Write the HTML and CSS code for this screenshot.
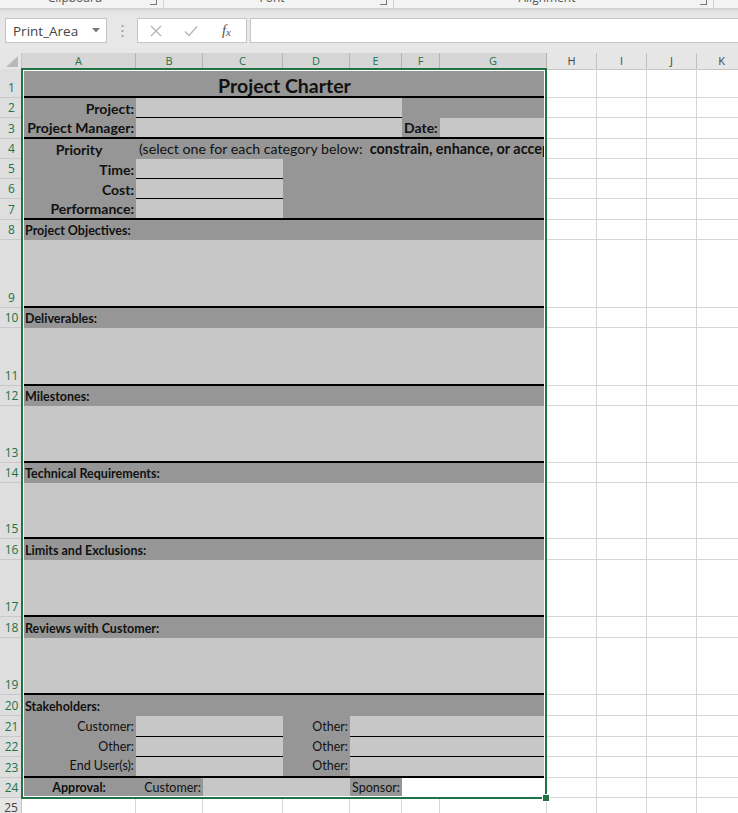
FILE: index.html
```html
<!DOCTYPE html>
<html>
<head>
<meta charset="utf-8">
<title>Project Charter</title>
<link rel="stylesheet" href="styles.css">
</head>
<body>
<div class="app">
  <div class="ribbon">
    <div class="grp g1"><span class="glabel">Clipboard</span><span class="launch"></span></div>
    <div class="grp g2"><span class="glabel">Font</span><span class="launch"></span></div>
    <div class="grp g3"><span class="glabel">Alignment</span><span class="launch"></span></div>
  </div>
  <div class="fbar">
    <div class="namebox">
      <span class="nbtext">Print_Area</span>
      <svg class="nbarrow" width="8" height="5" viewBox="0 0 8 5"><path d="M0 0 L8 0 L4 4.5 Z" fill="#7a7a7a"/></svg>
    </div>
    <div class="grip">
      <svg width="3" height="12" viewBox="0 0 3 12"><rect x="0.5" y="0" width="2" height="2" fill="#a6a6a6"/><rect x="0.5" y="5" width="2" height="2" fill="#a6a6a6"/><rect x="0.5" y="10" width="2" height="2" fill="#a6a6a6"/></svg>
    </div>
    <div class="fbtns">
      <svg class="ficon" width="12" height="12" viewBox="0 0 12 12"><path d="M1 1 L11 11 M11 1 L1 11" stroke="#b4b4b4" stroke-width="1.3" fill="none"/></svg>
      <svg class="ficon" width="14" height="12" viewBox="0 0 14 12"><path d="M1 6.5 L5 10.5 L13 1.5" stroke="#b4b4b4" stroke-width="1.4" fill="none"/></svg>
      <span class="fx">f<span class="fxx">x</span></span>
    </div>
    <div class="finput"></div>
  </div>

  <div class="sheet">
    <div class="colheads">
      <div class="corner"><svg width="12" height="11" viewBox="0 0 12 11"><path d="M12 0 L12 11 L0 11 Z" fill="#b9b9b9"/></svg></div>
      <div class="ch sel">A</div>
      <div class="ch sel">B</div>
      <div class="ch sel">C</div>
      <div class="ch sel">D</div>
      <div class="ch sel">E</div>
      <div class="ch sel">F</div>
      <div class="ch sel">G</div>
      <div class="ch">H</div>
      <div class="ch">I</div>
      <div class="ch">J</div>
      <div class="ch">K</div>
    </div>

    <div class="row h29">
      <div class="rh">1</div>
      <div class="pa thick">
        <div class="c d s7 title">Project Charter</div>
      </div>
      <div class="ext"></div>
    </div>

    <div class="row h20">
      <div class="rh">2</div>
      <div class="pa">
        <div class="c d lab">Project:</div>
        <div class="c l s4 ub"></div>
        <div class="c d s2"></div>
      </div>
      <div class="ext"></div>
    </div>

    <div class="row h21">
      <div class="rh">3</div>
      <div class="pa thick">
        <div class="c d lab">Project Manager:</div>
        <div class="c l s4"></div>
        <div class="c d lab left">Date:</div>
        <div class="c l"></div>
      </div>
      <div class="ext"></div>
    </div>

    <div class="row h20">
      <div class="rh">4</div>
      <div class="pa">
        <div class="c d lab center">Priority</div>
        <div class="c d s6 note">(select one for each category below:  <b>constrain, enhance, or accept)</b></div>
      </div>
      <div class="ext"></div>
    </div>

    <div class="row h20">
      <div class="rh">5</div>
      <div class="pa">
        <div class="c d lab">Time:</div>
        <div class="c l s2 ub"></div>
        <div class="c d s4"></div>
      </div>
      <div class="ext"></div>
    </div>

    <div class="row h20">
      <div class="rh">6</div>
      <div class="pa">
        <div class="c d lab">Cost:</div>
        <div class="c l s2 ub"></div>
        <div class="c d s4"></div>
      </div>
      <div class="ext"></div>
    </div>

    <div class="row h21">
      <div class="rh">7</div>
      <div class="pa thick">
        <div class="c d lab">Performance:</div>
        <div class="c l s2"></div>
        <div class="c d s4"></div>
      </div>
      <div class="ext"></div>
    </div>

    <div class="row h20">
      <div class="rh">8</div>
      <div class="pa"><div class="c d s7 sec">Project Objectives:</div></div>
      <div class="ext"></div>
    </div>
    <div class="row h68">
      <div class="rh">9</div>
      <div class="pa thick"><div class="c l s7"></div></div>
      <div class="ext"></div>
    </div>

    <div class="row h20">
      <div class="rh">10</div>
      <div class="pa"><div class="c d s7 sec">Deliverables:</div></div>
      <div class="ext"></div>
    </div>
    <div class="row h58">
      <div class="rh">11</div>
      <div class="pa thick"><div class="c l s7"></div></div>
      <div class="ext"></div>
    </div>

    <div class="row h20">
      <div class="rh">12</div>
      <div class="pa"><div class="c d s7 sec">Milestones:</div></div>
      <div class="ext"></div>
    </div>
    <div class="row h57">
      <div class="rh">13</div>
      <div class="pa thick"><div class="c l s7"></div></div>
      <div class="ext"></div>
    </div>

    <div class="row h20">
      <div class="rh">14</div>
      <div class="pa"><div class="c d s7 sec">Technical Requirements:</div></div>
      <div class="ext"></div>
    </div>
    <div class="row h56">
      <div class="rh">15</div>
      <div class="pa thick"><div class="c l s7"></div></div>
      <div class="ext"></div>
    </div>

    <div class="row h21">
      <div class="rh">16</div>
      <div class="pa"><div class="c d s7 sec">Limits and Exclusions:</div></div>
      <div class="ext"></div>
    </div>
    <div class="row h57">
      <div class="rh">17</div>
      <div class="pa thick"><div class="c l s7"></div></div>
      <div class="ext"></div>
    </div>

    <div class="row h21">
      <div class="rh">18</div>
      <div class="pa"><div class="c d s7 sec">Reviews with Customer:</div></div>
      <div class="ext"></div>
    </div>
    <div class="row h57">
      <div class="rh">19</div>
      <div class="pa thick"><div class="c l s7"></div></div>
      <div class="ext"></div>
    </div>

    <div class="row h21">
      <div class="rh">20</div>
      <div class="pa"><div class="c d s7 sec">Stakeholders:</div></div>
      <div class="ext"></div>
    </div>

    <div class="row h21">
      <div class="rh">21</div>
      <div class="pa">
        <div class="c d lab sm">Customer:</div>
        <div class="c l s2 ub"></div>
        <div class="c d lab sm">Other:</div>
        <div class="c l s3 ub"></div>
      </div>
      <div class="ext"></div>
    </div>

    <div class="row h20">
      <div class="rh">22</div>
      <div class="pa">
        <div class="c d lab sm">Other:</div>
        <div class="c l s2 ub"></div>
        <div class="c d lab sm">Other:</div>
        <div class="c l s3 ub"></div>
      </div>
      <div class="ext"></div>
    </div>

    <div class="row h21">
      <div class="rh">23</div>
      <div class="pa thick">
        <div class="c d lab sm">End User(s):</div>
        <div class="c l s2"></div>
        <div class="c d lab sm">Other:</div>
        <div class="c l s3"></div>
      </div>
      <div class="ext"></div>
    </div>

    <div class="row h20">
      <div class="rh">24</div>
      <div class="pa">
        <div class="c d lab sm bold center">Approval:</div>
        <div class="c d lab sm">Customer:</div>
        <div class="c l s2"></div>
        <div class="c d lab sm">Sponsor:</div>
        <div class="c w s2"></div>
      </div>
      <div class="ext"></div>
    </div>

    <div class="row h20">
      <div class="rh plain">25</div>
      <div class="pa">
        <div class="c e"></div><div class="c e"></div><div class="c e"></div><div class="c e"></div><div class="c e"></div><div class="c e"></div><div class="c e"></div>
      </div>
      <div class="ext"></div>
    </div>

    <div class="selection"></div>
  </div>
</div>
</body>
</html>
```

FILE: styles.css
```css
html, body {
  margin: 0;
  padding: 0;
}
body {
  background: #e7e7e7;
  font-family: "Lato", "Liberation Sans", sans-serif;
  overflow: hidden;
}
.app {
  width: 738px;
  height: 813px;
  overflow: hidden;
}

/* ribbon bottom strip */
.ribbon {
  height: 8px;
  background: #f3f3f3;
  display: flex;
  overflow: hidden;
}
.grp {
  display: flex;
  align-items: flex-start;
  border-right: 1px solid #d2d2d2;
  box-sizing: border-box;
}
.g1 { width: 164px; }
.g2 { width: 230px; }
.g3 { width: 320px; }
.glabel {
  flex: 1;
  text-align: center;
  font-family: "Open Sans", "Liberation Sans", sans-serif;
  font-size: 12px;
  line-height: 14px;
  margin-top: -9px;
  color: #555;
}
.launch {
  width: 6px;
  height: 6px;
  margin: -2px 6px 0 0;
  border-right: 1px solid #777;
  border-bottom: 1px solid #777;
}

/* formula bar */
.fbar {
  height: 45px;
  box-sizing: border-box;
  padding-top: 10px;
  display: flex;
  align-items: flex-start;
  background: linear-gradient(#cfcfcf, #e2e2e2 3px, #e7e7e7 6px);
}
.namebox {
  margin-left: 5px;
  width: 102px;
  height: 25px;
  box-sizing: border-box;
  background: #fff;
  border: 1px solid #c6c6c6;
  display: flex;
  align-items: center;
  padding: 0 6px 0 7px;
}
.nbtext {
  flex: 1;
  font-family: "Open Sans", "Liberation Sans", sans-serif;
  font-size: 13.5px;
  color: #444;
}
.grip {
  width: 30px;
  height: 25px;
  display: flex;
  align-items: center;
  justify-content: center;
}
.fbtns {
  width: 110px;
  height: 25px;
  box-sizing: border-box;
  background: #fff;
  border: 1px solid #c6c6c6;
  display: flex;
  align-items: center;
  padding-left: 12px;
  gap: 22px;
}
.fx {
  font-family: "Liberation Serif", serif;
  font-style: italic;
  font-size: 14.5px;
  color: #555;
  margin-left: 2px;
}
.fxx {
  font-size: 11px;
  position: relative;
  top: 1px;
}
.finput {
  margin-left: 3px;
  flex: 1;
  height: 25px;
  box-sizing: border-box;
  background: #fff;
  border: 1px solid #c6c6c6;
  border-right: none;
}

/* sheet */
.sheet {
  position: relative;
  background: #fff;
}
.colheads {
  display: grid;
  grid-template-columns: 22px 114px 67px 80px 67px 52px 38px 107px 50px 50px 50px 50px;
  height: 16px;
  background: #e6e6e6;
}
.corner {
  display: flex;
  align-items: flex-end;
  justify-content: flex-end;
  padding: 0 3px 2px 0;
  border-right: 1px solid #c4c4c4;
  border-bottom: 1px solid #c4c4c4;
}
.ch {
  box-sizing: border-box;
  border-right: 1px solid #c0c0c0;
  border-bottom: 1px solid #c4c4c4;
  font-family: "Open Sans", "Liberation Sans", sans-serif;
  font-size: 11px;
  line-height: 16px;
  text-align: center;
  color: #444;
}
.ch.sel {
  background: #d6d6d6;
  color: #217346;
  border-right-color: #b4b4b4;
}

.row {
  display: grid;
  grid-template-columns: 22px 525px 200px;
}
.h20 { height: 20px; }
.h21 { height: 21px; }
.h29 { height: 29px; }
.h56 { height: 56px; }
.h57 { height: 57px; }
.h58 { height: 58px; }
.h68 { height: 68px; }

.rh {
  box-sizing: border-box;
  background: #dedede;
  border-bottom: 1px solid #c9c9c9;
  color: #217346;
  font-family: "Open Sans", "Liberation Sans", sans-serif;
  font-size: 12px;
  line-height: 16px;
  display: flex;
  align-items: flex-end;
  justify-content: center;
  padding: 0 0 1px 1px;
}
.rh.plain {
  background: #e6e6e6;
  color: #444;
  border-right: 1px solid #c4c4c4;
}

.pa {
  display: grid;
  grid-template-columns: 114px 67px 80px 67px 52px 38px 107px;
  box-sizing: border-box;
  height: 100%;
}
.pa.thick {
  border-bottom: 2px solid #000;
}

.c {
  box-sizing: border-box;
  display: flex;
  align-items: flex-end;
  overflow: hidden;
  white-space: nowrap;
  padding: 0 2px 0 2px;
  color: #111;
  min-width: 0;
}
.s2 { grid-column: span 2; }
.s3 { grid-column: span 3; }
.s4 { grid-column: span 4; }
.s6 { grid-column: span 6; }
.s7 { grid-column: span 7; }

.d { background: #969696; }
.l { background: #c7c7c7; }
.w { background: #fff; }
.e {
  background: #fff;
  border-right: 1px solid #d6d6d6;
  border-bottom: 1px solid #d6d6d6;
}
.ub { border-bottom: 1px solid #000; }

.title {
  justify-content: center;
  font-weight: 700;
  font-size: 19.5px;
  line-height: 20px;
  padding-bottom: 0;
}
.lab {
  justify-content: flex-end;
  font-weight: 700;
  font-size: 14px;
  line-height: 18px;
}
.lab.left { justify-content: flex-start; }
.lab.center { justify-content: center; }
.lab.sm {
  font-weight: 400;
  font-size: 12.5px;
  line-height: 16px;
  padding-bottom: 2px;
}
.lab.sm.bold { font-weight: 700; }
.note {
  display: block;
  font-size: 14.2px;
  line-height: 18px;
  padding-top: 1px;
  white-space: pre;
  padding-left: 3px;
}
.note b {
  font-size: 14.4px;
}
.sec {
  font-weight: 700;
  font-size: 12.5px;
  line-height: 16px;
  padding-bottom: 1px;
  padding-left: 3px;
}

.ext {
  box-sizing: border-box;
  background-image: repeating-linear-gradient(to right, transparent 0, transparent 49px, #d6d6d6 49px, #d6d6d6 50px);
  border-bottom: 1px solid #d6d6d6;
}

.selection {
  position: absolute;
  left: 21px;
  top: 15px;
  width: 526px;
  height: 731px;
  box-sizing: border-box;
  border: 2px solid #217346;
  box-shadow: inset 0 0 0 1px #fff;
  pointer-events: none;
}
.selection::after {
  content: "";
  position: absolute;
  right: -5px;
  bottom: -5px;
  width: 6px;
  height: 6px;
  background: #217346;
  border: 1px solid #fff;
}
```
